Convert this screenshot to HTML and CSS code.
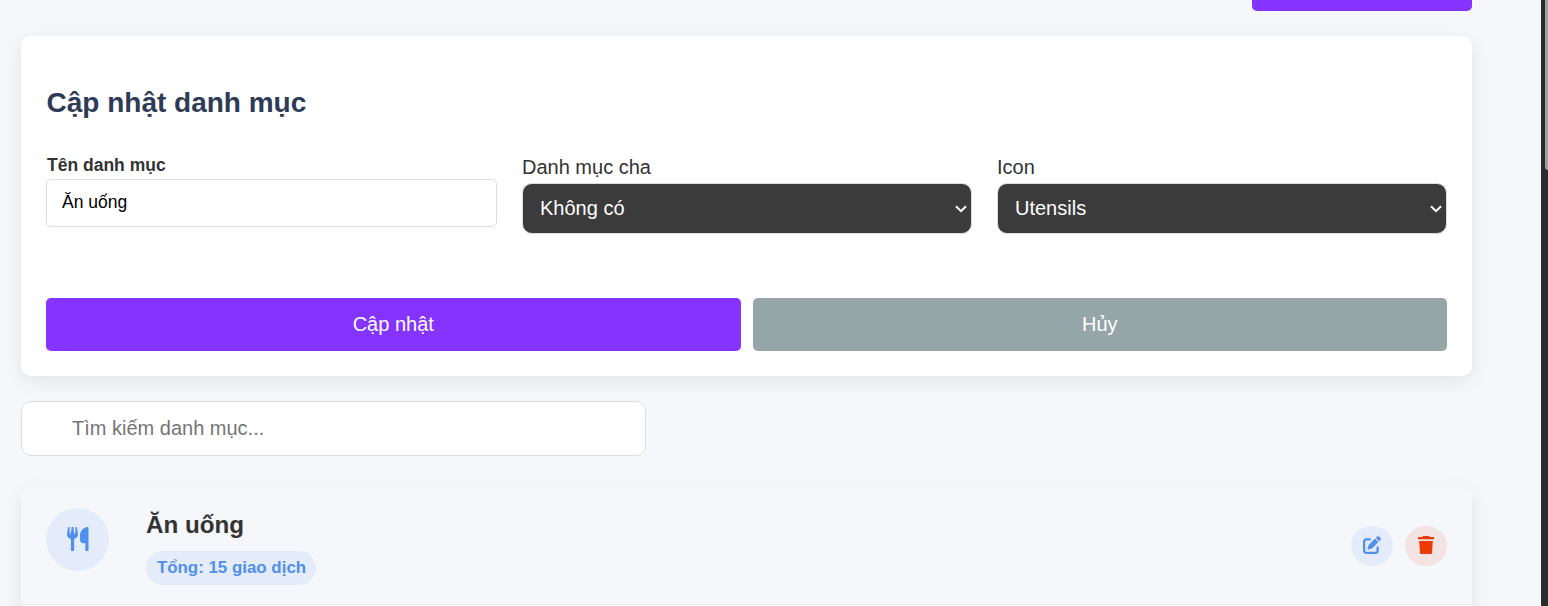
FILE: index.html
```html
<!DOCTYPE html>
<html lang="vi">
<head>
<meta charset="utf-8">
<title>Danh mục</title>
<link rel="stylesheet" href="styles.css">
</head>
<body>
<div class="app">
  <main class="page">
    <div class="toolbar"><div class="add-button"></div></div>
    <form class="form-card">
      <h2 class="form-title">Cập nhật danh mục</h2>
      <div class="fields">
        <div class="field">
          <label class="label label-strong" for="name">Tên danh mục</label>
          <input class="input" id="name" type="text" value="Ăn uống">
        </div>
        <div class="field">
          <label class="label" for="parent">Danh mục cha</label>
          <div class="select-wrap">
            <select class="select" id="parent"><option>Không có</option></select>
            <svg class="chevron" viewBox="0 0 12 8"><path d="M1 1.2 6 6.2 11 1.2"/></svg>
          </div>
        </div>
        <div class="field">
          <label class="label" for="icon">Icon</label>
          <div class="select-wrap">
            <select class="select" id="icon"><option>Utensils</option></select>
            <svg class="chevron" viewBox="0 0 12 8"><path d="M1 1.2 6 6.2 11 1.2"/></svg>
          </div>
        </div>
      </div>
      <div class="actions">
        <button class="button primary" type="button">Cập nhật</button>
        <button class="button secondary" type="button">Hủy</button>
      </div>
    </form>
    <input class="search" type="text" placeholder="Tìm kiếm danh mục...">
    <section class="category">
      <div class="category-head">
        <div class="category-icon">
          <svg class="utensils" viewBox="0 0 22 24">
            <path d="M1.100 0 0 7.300C0 9.800 1.400 11.500 3.900 12V23.200q0 .8.800.8h1.600q.8 0 .8-.8V12c2.500-.5 3.900-2.200 3.900-4.700L9.900 0H8.500l-.3 6.800H7.200L6.400 0H4.600l-.8 6.800H2.800L2.500 0Z"/>
            <path d="M20.700 0q.8 0 .8.800v22.400q0 .8-.8.800h-1.600q-.8 0-.8-.800V16.200h-1.700c-2.300 0-3.600-1.400-3.600-3.500V8.500C13 3.800 16.800 0 20.700 0Z"/>
          </svg>
        </div>
        <div class="category-info">
          <h3 class="category-name">Ăn uống</h3>
          <span class="badge">Tổng: 15 giao dịch</span>
        </div>
        <div class="category-actions">
          <button class="round edit" type="button" aria-label="Sửa">
            <svg class="edit-icon" viewBox="0 0 512 512"><path d="M471.600 21.700c-21.900-21.900-57.300-21.900-79.200 0L362.300 51.700l97.900 97.900 30.100-30.100c21.900-21.900 21.900-57.300 0-79.200L471.600 21.700zm-299.200 220c-6.100 6.100-10.800 13.600-13.500 21.900l-29.600 88.800c-2.900 8.600-.6 18.100 5.800 24.600s15.900 8.700 24.600 5.800l88.800-29.600c8.200-2.700 15.700-7.400 21.900-13.500L437.700 172.300 339.700 74.300 172.400 241.700zM96 64C43 64 0 107 0 160V416c0 53 43 96 96 96H352c53 0 96-43 96-96V320c0-17.700-14.300-32-32-32s-32 14.300-32 32v96c0 17.700-14.300 32-32 32H96c-17.700 0-32-14.300-32-32V160c0-17.700 14.300-32 32-32h96c17.700 0 32-14.300 32-32s-14.300-32-32-32H96z"/></svg>
          </button>
          <button class="round delete" type="button" aria-label="Xóa">
            <svg class="trash-icon" viewBox="0 0 16 18"><path d="M5 0h6l.6 1H15.500q.5 0 .5.500v1.200q0 .5-.5.500H.5Q0 3.200 0 2.700V1.500Q0 1 .5 1h3.900ZM1.200 5h13.600L14 17q-.1 1-1 1H3Q2.100 18 2 17Z"/></svg>
          </button>
        </div>
      </div>
      <div class="category-body"></div>
    </section>
  </main>
  <div class="scroll-track"><div class="scroll-thumb"></div></div>
</div>
</body>
</html>
```
FILE: styles.css
```css
* { box-sizing: border-box; }
body {
  margin: 0;
  background: #f5f7fb;
  color: #333;
  font: 20px/23px "Liberation Sans", Arial, sans-serif;
}
.app { display: flex; height: 606px; overflow: hidden; }
.page { flex: 1; padding: 0 69px 0 21px; }
.toolbar { display: flex; justify-content: flex-end; margin-bottom: 25px; }
.add-button { width: 220px; height: 11px; background: #8533ff; border-radius: 0 0 5px 5px; }
.form-card {
  height: 340px;
  padding: 50px 25px 0;
  background: #fff;
  border-radius: 10px;
  box-shadow: 0 5px 19px rgba(0, 0, 0, .08);
}
.form-title {
  margin: 0 0 35px;
  padding-left: .5px;
  color: #2e3b56;
  font-size: 28px;
  line-height: 34px;
}
.fields { display: grid; grid-template-columns: 451px 450px 450px; gap: 25px; height: 143px; }
.field { display: flex; flex-direction: column; }
.label { height: 28px; line-height: 24px; }
.label-strong { height: 24px; padding-left: 1px; font-size: 17.5px; font-weight: 700; line-height: 20px; }
.input {
  width: 100%;
  height: 48px;
  padding: 0 15px 2px;
  border: 1px solid #ddd;
  border-radius: 5px;
  background: #fff;
  color: #000;
  font: 17.5px "Liberation Sans", Arial, sans-serif;
}
.select-wrap { position: relative; }
.select {
  width: 100%;
  height: 51px;
  padding: 0 17px 2px;
  appearance: none;
  border: 1px solid #ddd;
  border-radius: 10px;
  background: #3b3b3b;
  color: #fff;
  font: 20px "Liberation Sans", Arial, sans-serif;
}
.chevron {
  position: absolute;
  right: 5px;
  top: 22px;
  width: 12px;
  height: 8px;
  fill: none;
  stroke: #fff;
  stroke-width: 2;
}
.actions { display: grid; grid-template-columns: 1fr 1fr; gap: 12px; }
.button {
  height: 53px;
  padding: 0 0 1px;
  border: 0;
  border-radius: 5px;
  color: #fff;
  font: 20px "Liberation Sans", Arial, sans-serif;
}
.primary { background: #8533ff; }
.secondary { background: #95a5a8; }
.search {
  display: block;
  width: 625px;
  height: 55px;
  margin: 25px 0 31px;
  padding: 0 50px;
  border: 1px solid #ddd;
  border-radius: 10px;
  background: #fff;
  font: 20px "Liberation Sans", Arial, sans-serif;
}
.search::placeholder { color: #757575; }
.category {
  height: 200px;
  overflow: hidden;
  border-radius: 10px;
  background: #fff;
  box-shadow: 0 5px 19px rgba(0, 0, 0, .08);
}
.category-head {
  display: flex;
  align-items: flex-start;
  height: 118px;
  padding: 21px 25px 0;
  border-bottom: 1px solid #e8eaed;
  background: #f5f7fb;
}
.category-icon {
  display: grid;
  place-items: center;
  width: 63px;
  height: 63px;
  margin-right: 37px;
  border-radius: 50%;
  background: #e4ecfa;
}
.utensils { width: 22px; height: 24px; margin: 0 0 1px 1px; fill: #508fec; }
.category-info { flex: 1; }
.category-name { margin: 0 0 11px; padding-top: 1px; font-size: 24.2px; line-height: 31px; }
.badge {
  display: block;
  width: 170px;
  height: 34px;
  padding-left: 1px;
  border-radius: 17px;
  background: #e4ecfa;
  color: #508fec;
  font-size: 16.9px;
  font-weight: 700;
  line-height: 33px;
  text-align: center;
  white-space: nowrap;
}
.category-actions { display: flex; gap: 12px; padding-top: 18px; }
.round { display: grid; place-items: center; width: 42px; height: 40px; padding: 0; border: 0; border-radius: 50%; }
.edit { background: #e4ecfa; }
.delete { background: #f3e3e2; }
.edit-icon { width: 18px; height: 18px; margin-bottom: 2px; fill: #508fec; }
.trash-icon { width: 16px; height: 18px; margin-bottom: 2px; fill: #ed3b00; }
.scroll-track { display: flex; justify-content: flex-end; width: 7px; background: #292c2d; }
.scroll-thumb { width: 3px; height: 170px; background: #9f9f9f; border-bottom-left-radius: 3px; }
```
